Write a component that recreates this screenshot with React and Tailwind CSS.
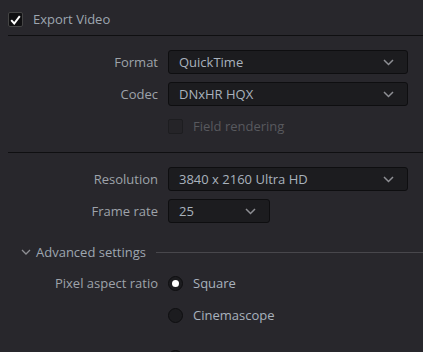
import React from "react";

const Chevron = ({ className = "" }) => (
  <svg width="11" height="7" viewBox="0 0 11 7" className={className} fill="none">
    <path d="M1 1l4.5 4.5L10 1" stroke="#8e8f94" strokeWidth="1.5" />
  </svg>
);

const Select = ({ value, w }) => (
  <div className={`flex items-center justify-between h-[24px] ${w} bg-[#1c1c1f] border border-[#0e0e10] rounded-[3px] pl-[10px] pr-[13px] text-[#a9b2bd]`}>
    <span>{value}</span>
    <Chevron />
  </div>
);

const Row = ({ label, children, className = "" }) => (
  <div className={`flex items-center h-[24px] ${className}`}>
    <div className="w-[158px] text-right text-[#9ea3aa] pr-0">{label}</div>
    <div className="ml-[10px] flex items-center">{children}</div>
  </div>
);

const Radio = ({ checked }) => (
  <div className="w-[15px] h-[15px] rounded-full bg-[#1c1c1f] border border-[#0e0e10] flex items-center justify-center">
    {checked && <div className="w-[7px] h-[7px] rounded-full bg-white" />}
  </div>
);

export default function App() {
  return (
    <div
      className="w-[423px] h-[352px] overflow-hidden bg-[#28272c] text-[13px] leading-none"
      style={{ fontFamily: '"Open Sans", "Noto Sans", sans-serif' }}
    >
      <div className="flex items-center pl-[8px] pt-[12px]">
        <div className="w-[15px] h-[15px] bg-[#0f0f11] border border-[#444] rounded-[2px] flex items-center justify-center">
          <svg width="11" height="10" viewBox="0 0 11 10" fill="none">
            <path d="M1.2 5.2L4.2 8.5L9.8 1.2" stroke="white" strokeWidth="2" />
          </svg>
        </div>
        <span className="ml-[10px] text-[#9ea6b0]">Export Video</span>
      </div>
      <div className="ml-[8px] mt-[8px] h-px bg-[#0f0f11]" />

      <Row label="Format" className="mt-[14px]">
        <Select value="QuickTime" w="w-[240px]" />
      </Row>
      <Row label="Codec" className="mt-[8px]">
        <Select value="DNxHR HQX" w="w-[240px]" />
      </Row>
      <Row label="" className="mt-[8px]">
        <div className="w-[15px] h-[15px] border border-[#1d1d20] bg-[#252428] rounded-[2px]" />
        <span className="ml-[10px] text-[#58595e]">Field rendering</span>
      </Row>
      <div className="ml-[8px] mt-[14px] h-px bg-[#0f0f11]" />

      <Row label="Resolution" className="mt-[14px]">
        <Select value="3840 x 2160 Ultra HD" w="w-[240px]" />
      </Row>
      <Row label="Frame rate" className="mt-[8px]">
        <Select value="25" w="w-[102px]" />
      </Row>

      <div className="flex items-center mt-[19px] h-[20px]">
        <svg width="10" height="7" viewBox="0 0 10 7" className="ml-[21px]" fill="none">
          <path d="M1 1l4 4 4-4" stroke="#8e8f94" strokeWidth="1.3" />
        </svg>
        <span className="ml-[5px] text-[#9ea6b0]">Advanced settings</span>
        <div className="flex-1 h-px bg-[#48474c] ml-[10px]" />
      </div>

      <Row label="Pixel aspect ratio" className="mt-[9px]">
        <Radio checked />
        <span className="ml-[10px] text-[#a9b2bd]">Square</span>
      </Row>
      <Row label="" className="mt-[8px]">
        <Radio />
        <span className="ml-[10px] text-[#a9b2bd]">Cinemascope</span>
      </Row>
      <Row label="" className="mt-[18px]">
        <Radio />
      </Row>
    </div>
  );
}
